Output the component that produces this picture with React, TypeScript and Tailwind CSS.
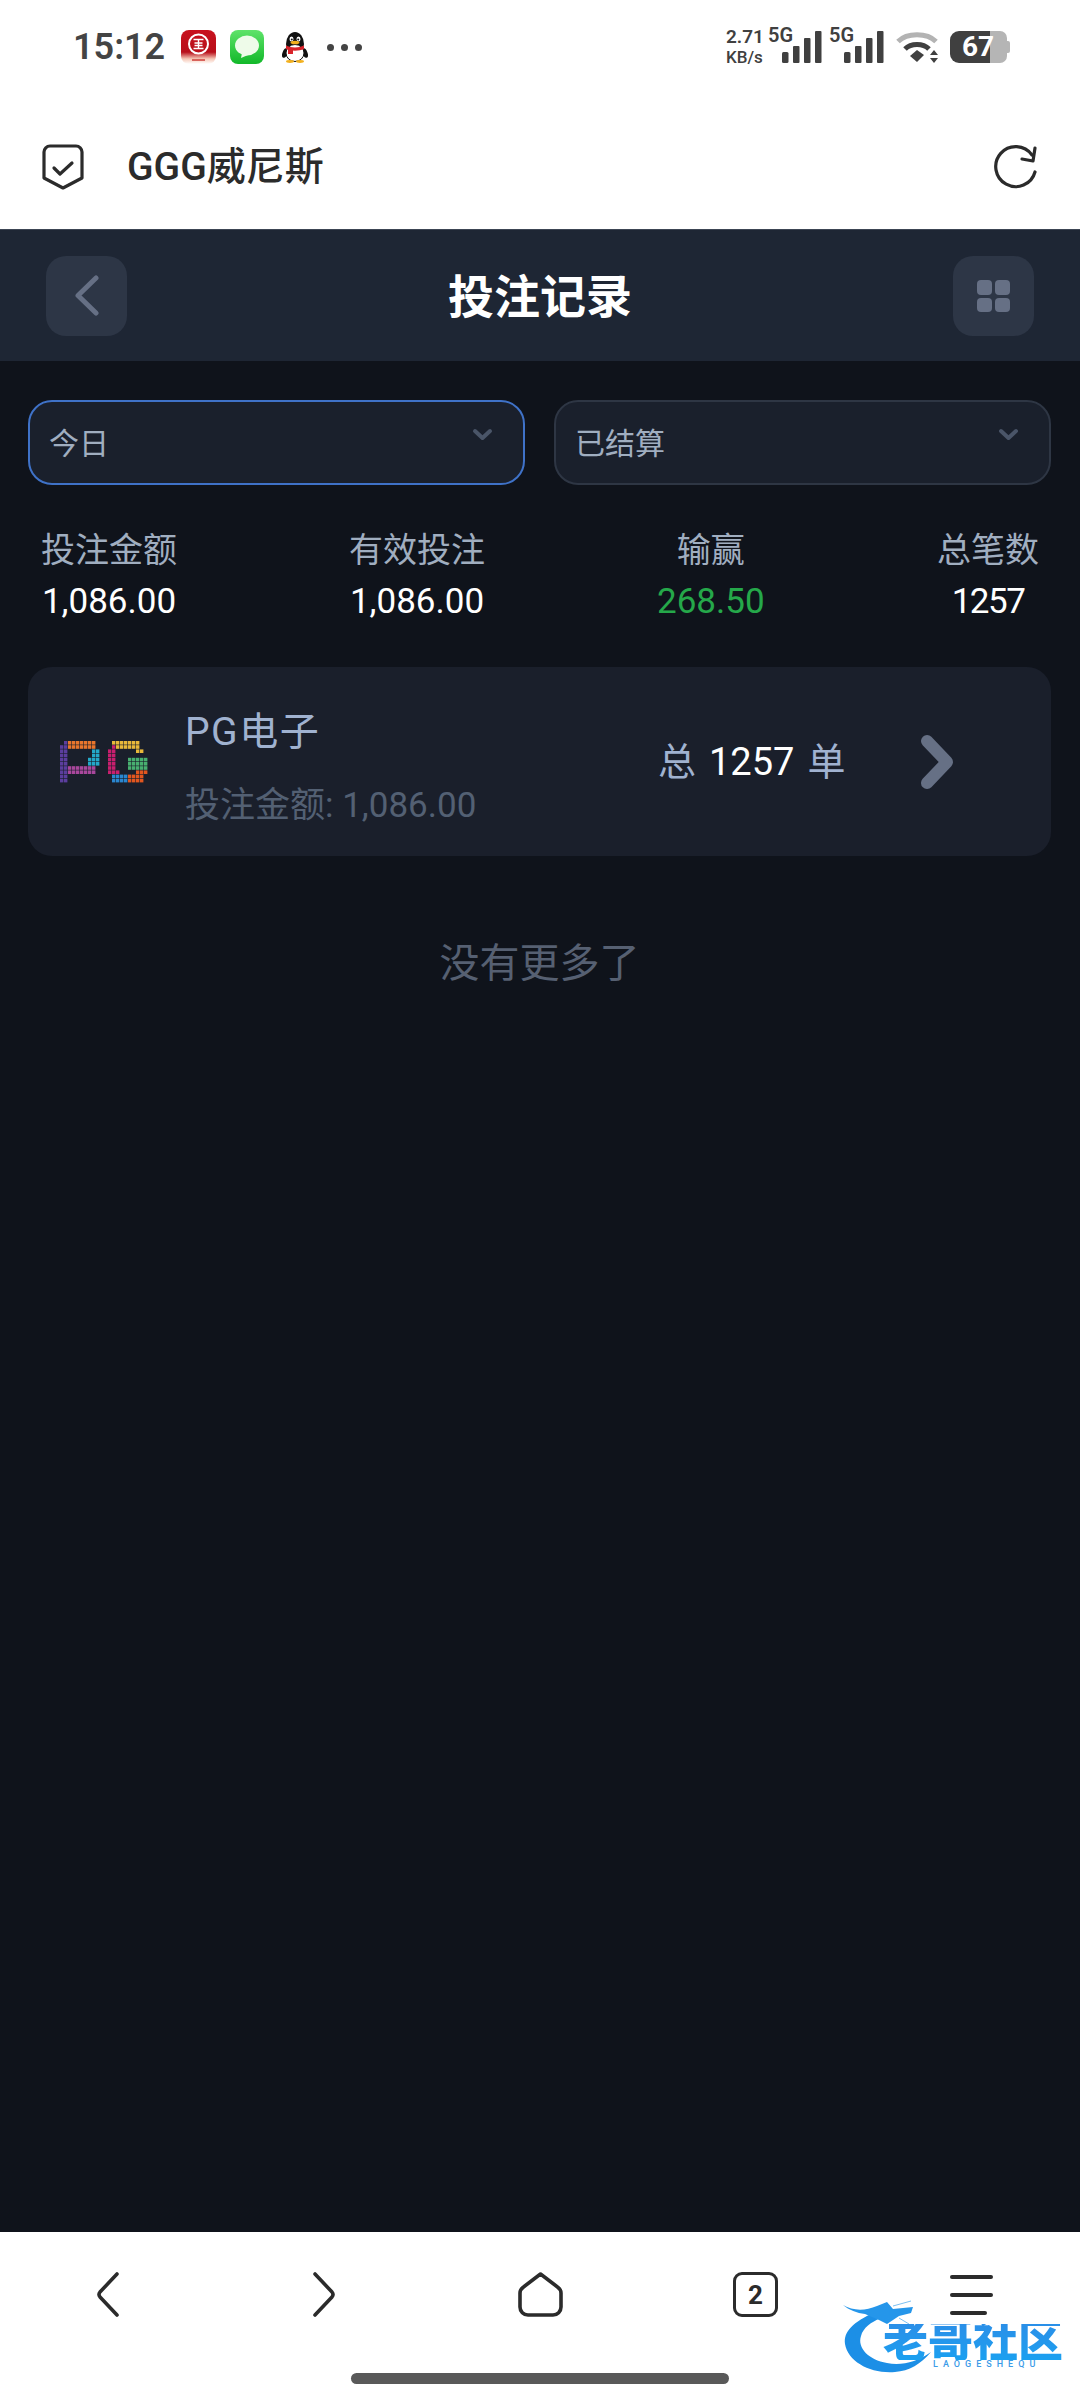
const PG_CELLS: [string, number, number, number, number][] = [
  // color, col start, row start, col end, row end (inclusive)
  ['#5b3e9e', 0, 1, 1, 9],
  ['#5b3e9e', 1, 0, 1, 0],
  ['#e8762c', 2, 0, 8, 1],
  ['#23a9c9', 9, 2, 9, 5],
  ['#23a9c9', 8, 2, 8, 5],
  ['#23a9c9', 7, 4, 7, 5],
  ['#a8479c', 2, 6, 8, 7],
  ['#c81f6e', 12, 2, 13, 7],
  ['#c81f6e', 13, 1, 13, 1],
  ['#c81f6e', 14, 7, 14, 7],
  ['#e8b83a', 14, 0, 19, 1],
  ['#e8b83a', 19, 2, 20, 2],
  ['#e8b83a', 13, 0, 13, 0],
  ['#48b070', 17, 4, 21, 6],
  ['#2a86cf', 13, 8, 16, 9],
  ['#e2561f', 17, 8, 20, 9],
  ['#e2561f', 19, 7, 21, 7],
];

function PgLogo() {
  const rects: React.ReactElement[] = [];
  PG_CELLS.forEach(([color, c0, r0, c1, r1], i) => {
    for (let c = c0; c <= c1; c++) {
      for (let r = r0; r <= r1; r++) {
        rects.push(<rect key={`${i}-${c}-${r}`} x={c * 4} y={r * 4.2} width={3.4} height={3.6} fill={color} />);
      }
    }
  });
  return (
    <svg width="88" height="42" viewBox="0 0 88 42">
      {rects}
    </svg>
  );
}

function BankIcon() {
  return (
    <svg width="35" height="34" viewBox="0 0 35 34">
      <defs>
        <linearGradient id="bank" x1="0" y1="0" x2="0" y2="1">
          <stop offset="0" stopColor="#c8121e" />
          <stop offset="0.65" stopColor="#b80f1a" />
          <stop offset="0.85" stopColor="#f6c9b8" />
          <stop offset="1" stopColor="#ffffff" />
        </linearGradient>
      </defs>
      <rect width="35" height="34" rx="8" fill="url(#bank)" />
      <circle cx="17.5" cy="14" r="9.5" fill="none" stroke="#fff" strokeWidth="2" />
      <path d="M12.5 9.5h10M12.5 18.5h10M17.5 9.5v9M13.5 13h8M13.5 15.5h8" stroke="#fff" strokeWidth="1.4" fill="none" />
      <rect x="11" y="29" width="13" height="2" fill="#d8635c" />
    </svg>
  );
}

function MessageIcon() {
  return (
    <svg width="34" height="34" viewBox="0 0 34 34">
      <defs>
        <linearGradient id="msg" x1="0" y1="0" x2="0" y2="1">
          <stop offset="0" stopColor="#5fe36a" />
          <stop offset="1" stopColor="#12b829" />
        </linearGradient>
      </defs>
      <rect width="34" height="34" rx="8" fill="url(#msg)" />
      <ellipse cx="17" cy="15.5" rx="12" ry="10" fill="#eefbe9" />
      <path d="M12 23l-1 5 7-3z" fill="#eefbe9" />
    </svg>
  );
}

function PenguinIcon() {
  return (
    <svg width="26" height="32" viewBox="0 0 26 32">
      <ellipse cx="13" cy="13" rx="9" ry="12" fill="#111" />
      <ellipse cx="3" cy="22" rx="2.5" ry="5" transform="rotate(20 3 22)" fill="#111" />
      <ellipse cx="23" cy="22" rx="2.5" ry="5" transform="rotate(-20 23 22)" fill="#111" />
      <ellipse cx="13" cy="22" rx="9" ry="8.5" fill="#fff" stroke="#111" strokeWidth="1" />
      <ellipse cx="9.5" cy="8" rx="2" ry="2.6" fill="#fff" />
      <ellipse cx="16.5" cy="8" rx="2" ry="2.6" fill="#fff" />
      <circle cx="9.8" cy="8.4" r="1" fill="#111" />
      <circle cx="16.2" cy="8.4" r="1" fill="#111" />
      <ellipse cx="13" cy="11.5" rx="4.5" ry="1.8" fill="#f2b01e" />
      <path d="M4 14.5c5 2.5 13 2.5 18 0v3.5c-5 2.2-13 2.2-18 0z" fill="#d8232a" />
      <rect x="6" y="17" width="5" height="6" fill="#d8232a" />
      <ellipse cx="8" cy="30.5" rx="4" ry="1.4" fill="#f2b01e" />
      <ellipse cx="18" cy="30.5" rx="4" ry="1.4" fill="#f2b01e" />
    </svg>
  );
}

function SignalBars() {
  return (
    <svg width="40" height="32" viewBox="0 0 40 32" fill="#404040">
      <rect x="0" y="21" width="6.5" height="11" rx="1.5" />
      <rect x="11" y="15" width="6.5" height="17" rx="1" />
      <rect x="22" y="7" width="6.5" height="25" rx="1" />
      <rect x="33" y="0" width="6.5" height="32" rx="1" />
    </svg>
  );
}

function WifiIcon() {
  return (
    <svg width="44" height="32" viewBox="0 0 44 32" fill="none">
      <path d="M2 10.500C11 1.500 31 1.500 40 10.500" stroke="#b3b3b3" strokeWidth="5" />
      <path d="M9 18c6-6 18-6 24 0" stroke="#404040" strokeWidth="5" />
      <path d="M14 25l7-6 7 5-7 7z" fill="#404040" />
      <path d="M38 19l4 5h-8zM38 32l4-5h-8z" fill="#404040" />
    </svg>
  );
}

function Battery() {
  return (
    <div className="relative flex h-[32px] w-[60px]">
      <div className="w-[40px] rounded-l-[9px] bg-[#404040]" />
      <div className="w-[17px] rounded-r-[7px] bg-[#b5b5b5]" />
      <div className="my-auto h-[12px] w-[3px] rounded-r-[2px] bg-[#b5b5b5]" />
      <span className="absolute left-[12px] top-0 text-[28px] font-bold leading-[32px] text-white">67</span>
    </div>
  );
}

function StatusBar() {
  return (
    <div className="flex h-[94px] items-center justify-between bg-white pl-[73px] pr-[70px]">
      <div className="flex items-center">
        <span className="w-[108px] text-[36px] font-semibold leading-none text-[#444444]">15:12</span>
        <BankIcon />
        <div className="ml-[14px]"><MessageIcon /></div>
        <div className="ml-[18px]"><PenguinIcon /></div>
        <div className="ml-[19px] flex gap-[7px]">
          <i className="h-[7px] w-[7px] rounded-full bg-[#444444]" />
          <i className="h-[7px] w-[7px] rounded-full bg-[#444444]" />
          <i className="h-[7px] w-[7px] rounded-full bg-[#444444]" />
        </div>
      </div>
      <div className="flex items-center">
        <div className="flex w-[42px] flex-col text-[#404040]">
          <span className="text-[19px] font-semibold leading-[20px]">2.71</span>
          <span className="text-[17px] font-medium leading-[20px]">KB/s</span>
        </div>
        <div className="relative w-[61px] pl-[14px]">
          <span className="absolute left-0 top-[-6px] text-[20px] font-semibold leading-[20px] text-[#404040]">5G</span>
          <SignalBars />
        </div>
        <div className="relative w-[55px] pl-[15px]">
          <span className="absolute left-0 top-[-6px] text-[20px] font-semibold leading-[20px] text-[#404040]">5G</span>
          <SignalBars />
        </div>
        <div className="ml-[12px]"><WifiIcon /></div>
        <div className="ml-[10px]"><Battery /></div>
      </div>
    </div>
  );
}

function BrowserBar() {
  return (
    <div className="flex h-[135px] items-center justify-between bg-white pl-[42px] pr-[42px] pt-[11px]">
      <div className="flex items-center">
        <svg width="42" height="46" viewBox="0 0 42 46" fill="none" stroke="#2b2b2b" strokeWidth="3.2" strokeLinecap="round" strokeLinejoin="round">
          <path d="M8 2h26a6 6 0 0 1 6 6v26l-19 10L2 34V8a6 6 0 0 1 6-6z" />
          <path d="M12 24l6 6 12-11" />
        </svg>
        <span className="ml-[43px] text-[39px] font-medium leading-none text-[#2b2b2b]">GGG威尼斯</span>
      </div>
      <svg width="44" height="44" viewBox="0 0 44 44" fill="none" stroke="#2b2b2b" strokeWidth="3.2" strokeLinecap="round" strokeLinejoin="round">
        <path d="M41 27a20 20 0 1 1-3-17" />
        <path d="M41 3l-2 13-11-2" />
      </svg>
    </div>
  );
}

function Select({ label, focused }: { label: string; focused?: boolean }) {
  return (
    <div
      className={`flex h-[85px] w-[497px] items-center justify-between rounded-[24px] border-[2.5px] bg-[#1a202c] pl-[19px] pr-[30px] ${
        focused ? 'border-[#3f72c8]' : 'border-[#2e3644]'
      }`}
    >
      <span className="mt-[2px] text-[30px] leading-none text-[#a0aec0]">{label}</span>
      <svg className="mb-[16px]" width="21" height="13" viewBox="0 0 21 13" fill="none" stroke="#4a5568" strokeWidth="4" strokeLinecap="round" strokeLinejoin="round">
        <path d="M3 3l7.500 7L18 3" />
      </svg>
    </div>
  );
}

function Stat({ label, value, green, tight }: { label: string; value: string; green?: boolean; tight?: boolean }) {
  return (
    <div className="flex w-fit flex-col items-center">
      <span className="text-[34px] leading-[40px] text-[#a0aec0]">{label}</span>
      <span className={`mt-[12px] text-[35px] leading-[40px] ${green ? 'text-[#25a84a]' : 'text-white'} ${tight ? 'tracking-[-1.5px]' : ''}`}>
        {value}
      </span>
    </div>
  );
}

function HeaderButton({ children }: { children: React.ReactNode }) {
  return (
    <div className="flex h-[80px] w-[81px] items-center justify-center rounded-[20px] bg-[#2d3646]">
      {children}
    </div>
  );
}

function BottomNav() {
  return (
    <div className="relative flex h-[168px] flex-col bg-white">
      <div className="flex h-[85px] items-end pl-[97px]">
        <svg width="22" height="45" viewBox="0 0 22 45" fill="none" stroke="#2b2b2b" strokeWidth="3.6" strokeLinecap="round" strokeLinejoin="round">
          <path d="M20 2L3 20q-2 2.500 0 5l17 18" />
        </svg>
        <svg className="ml-[194px]" width="22" height="45" viewBox="0 0 22 45" fill="none" stroke="#2b2b2b" strokeWidth="3.6" strokeLinecap="round" strokeLinejoin="round">
          <path d="M2 2l17 18q2 2.500 0 5L2 43" />
        </svg>
        <svg className="ml-[183px]" width="45" height="45" viewBox="0 0 45 45" fill="none" stroke="#2b2b2b" strokeWidth="3.6" strokeLinejoin="round">
          <path d="M22.500 2l17 13q3.500 2.500 3.500 6v14a8 8 0 0 1-8 8H10a8 8 0 0 1-8-8V21q0-3.500 3.500-6z" />
        </svg>
        <div className="ml-[170px] flex h-[45px] w-[45px] items-center justify-center rounded-[9px] border-[3.6px] border-[#2b2b2b] text-[26px] font-bold leading-none text-[#2b2b2b]">
          2
        </div>
        <div className="ml-[172px] flex w-[43px] flex-col gap-[14px] pb-[2px]">
          <i className="h-[4px] w-[43px] rounded-full bg-[#2b2b2b]" />
          <i className="h-[4px] w-[43px] rounded-full bg-[#2b2b2b]" />
          <i className="h-[4px] w-[37px] rounded-full bg-[#2b2b2b]" />
        </div>
      </div>
      <div className="mx-auto mt-[56px] h-[11px] w-[378px] rounded-full bg-[#595959]" />

      {/* watermark */}
      <div className="absolute left-[843px] top-[68px] h-[74px] w-[222px]">
        <svg className="absolute left-0 top-0" width="100" height="74" viewBox="0 0 100 74" fill="none">
          <path d="M32 12C10 22 0 32 2 44C5 62 28 74 52 72C66 71 78 64 88 52C74 62 58 66 44 63C26 60 14 48 18 36C20 28 28 22 38 18Z" fill="#1c8fe6" />
          <path d="M0 5C10 11 22 11 34 6L44 2L50 9L70 7L68 13L56 16L44 24L36 20L22 14C14 13 6 10 0 5Z" fill="#2596ea" />
          <path d="M50 6L68 1M56 18L66 24" stroke="#7cc0f2" strokeWidth="1" />
        </svg>
        <span className="absolute left-[40px] top-[24px] whitespace-nowrap bg-gradient-to-b from-[#2a8fe8] to-[#1aa0f0] bg-clip-text text-[45px] font-black leading-[36px] text-transparent">
          老哥社区
        </span>
        <span className="absolute left-[90px] top-[60px] whitespace-nowrap text-[9px] font-medium leading-none tracking-[5px] text-[#3b9be8]">
          LAOGESHEQU
        </span>
      </div>
    </div>
  );
}

export default function App() {
  return (
    <div className="flex h-[2400px] w-[1080px] flex-col bg-white font-['Roboto','Noto_Sans_CJK_SC',sans-serif]">
      <StatusBar />
      <BrowserBar />

      <div className="flex h-[132px] items-center justify-between border-t border-[#3c4554] bg-[#1e2634] pl-[46px] pr-[46px]">
        <HeaderButton>
          <svg width="25" height="41" viewBox="0 0 25 41" fill="none" stroke="#667085" strokeWidth="5" strokeLinecap="round" strokeLinejoin="round">
            <path d="M22 3L4 20.500 22 38" />
          </svg>
        </HeaderButton>
        <span className="mt-[2px] text-[46px] font-bold leading-none text-white">投注记录</span>
        <HeaderButton>
          <svg width="33" height="32" viewBox="0 0 33 32" fill="#667085">
            <rect width="15" height="15" rx="4" />
            <rect x="18" width="15" height="15" rx="4" />
            <rect y="18" width="15" height="14" rx="4" />
            <rect x="18" y="18" width="15" height="14" rx="4" />
          </svg>
        </HeaderButton>
      </div>

      <div className="flex flex-1 flex-col bg-[#0f131b] pl-[28px] pr-[29px] pt-[39px]">
        <div className="flex gap-[29px]">
          <Select label="今日" focused />
          <Select label="已结算" />
        </div>

        <div className="mt-[45px] grid grid-cols-[308px_308px_280px_102px] pl-[13px]">
          <Stat label="投注金额" value="1,086.00" />
          <Stat label="有效投注" value="1,086.00" />
          <Stat label="输赢" value="268.50" green />
          <Stat label="总笔数" value="1257" tight />
        </div>

        <div className="mt-[45px] flex h-[189px] items-center rounded-[24px] bg-[#1a1f2b] pl-[32px]">
          <PgLogo />
          <div className="ml-[37px] flex w-[473px] flex-col pt-[15px]">
            <span className="text-[39px] leading-[40px] tracking-[1.5px] text-[#a0b2d0]">PG电子</span>
            <span className="mt-[34px] text-[35px] leading-[40px] text-[#536073]">投注金额: 1,086.00</span>
          </div>
          <div className="flex items-center gap-[13px] text-[38px] leading-none">
            <span className="text-[#a0b2d0]">总</span>
            <span className="text-white">1257</span>
            <span className="text-[#a0b2d0]">单</span>
          </div>
          <svg className="ml-[75px]" width="34" height="56" viewBox="0 0 34 56" fill="none" stroke="#667085" strokeWidth="12" strokeLinecap="round" strokeLinejoin="round">
            <path d="M7 7l20 21L7 49" />
          </svg>
        </div>

        <div className="mt-[87px] text-center text-[40px] leading-[42px] text-[#566072]">没有更多了</div>
      </div>

      <BottomNav />
    </div>
  );
}
